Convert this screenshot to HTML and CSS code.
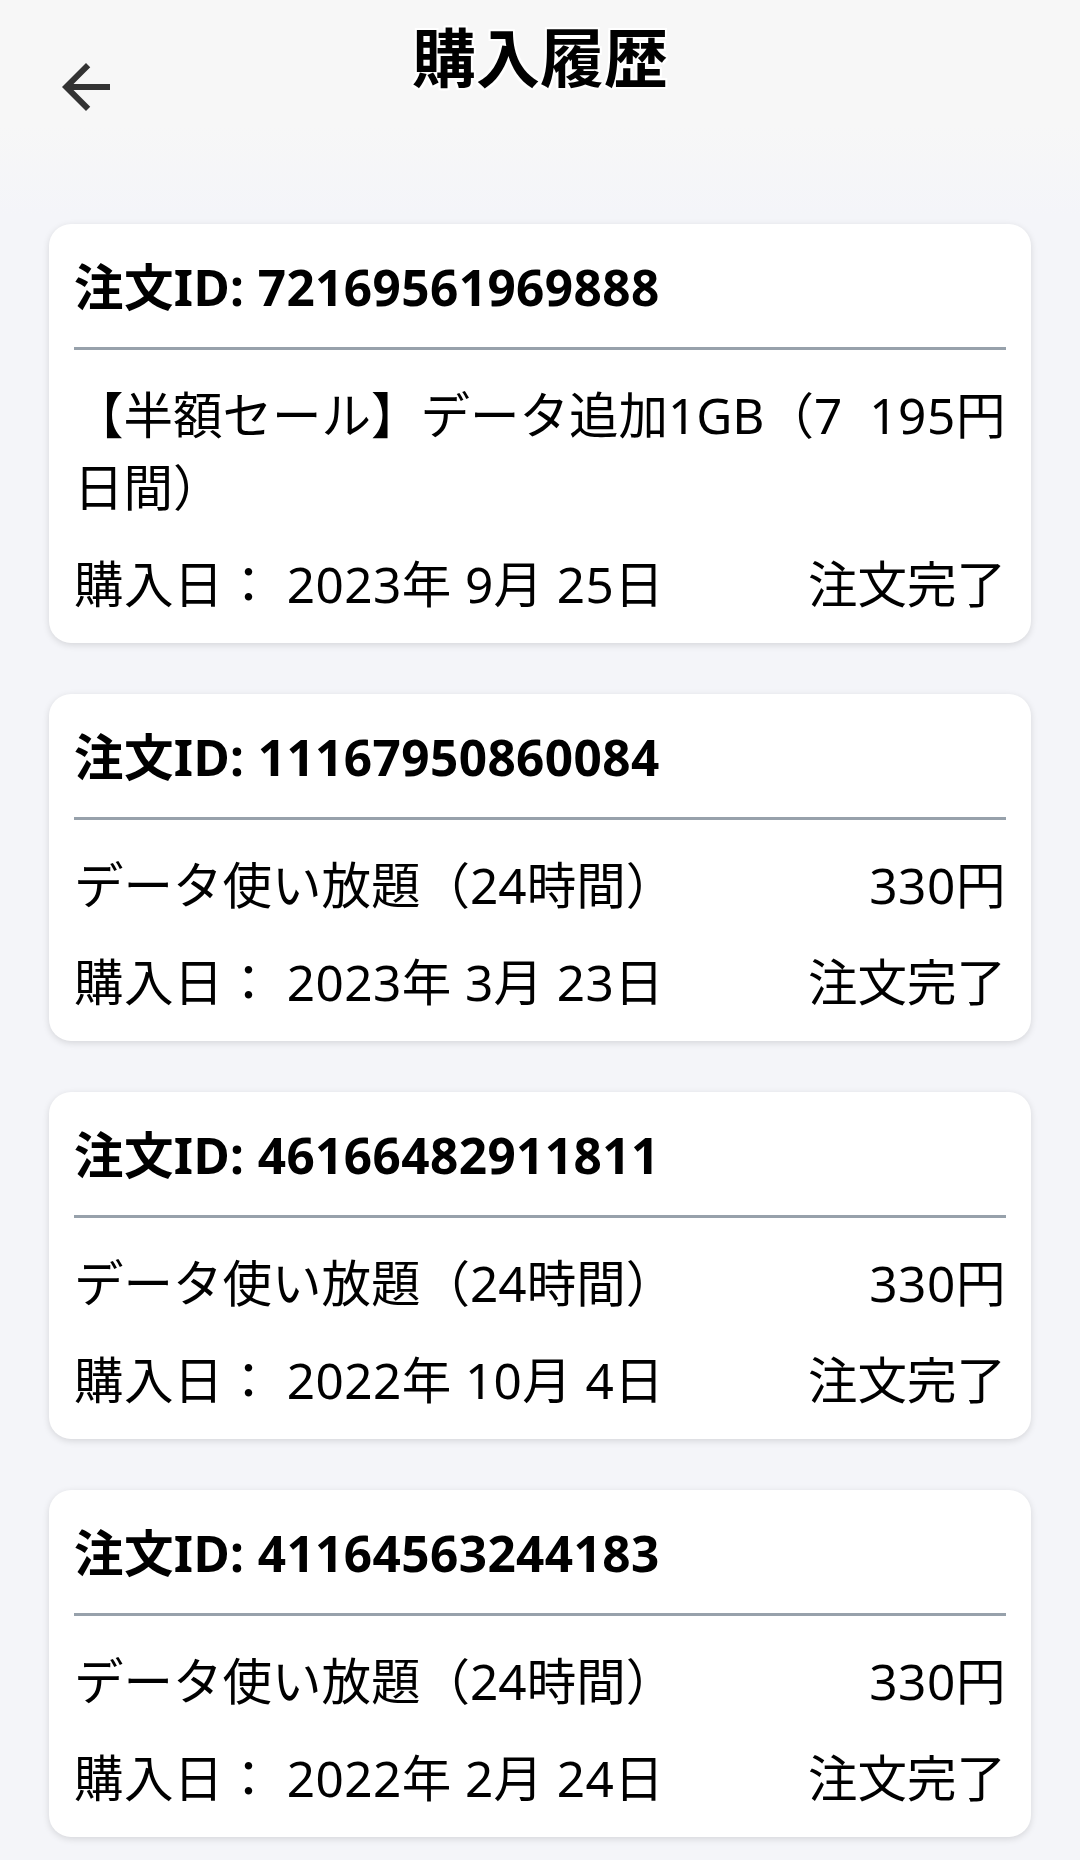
FILE: index.html
```html
<!DOCTYPE html>
<html lang="ja">
<head>
<meta charset="utf-8">
<title>購入履歴</title>
<link rel="stylesheet" href="styles.css">
</head>
<body>
<header class="header">
  <div class="back">
    <svg class="back-icon" viewBox="0 0 24 24" width="72" height="72" aria-hidden="true">
      <path d="M20 11H7.83l5.59-5.59L12 4l-8 8 8 8 1.41-1.41L7.83 13H20v-2z" fill="#333333"/>
    </svg>
  </div>
  <h1 class="title">購入履歴</h1>
</header>
<main class="list">
  <section class="card">
    <div class="order-id">注文ID: 72169561969888</div>
    <div class="divider"></div>
    <div class="row product">
      <span class="name">【半額セール】データ追加1GB（7日間）</span>
      <span class="price">195円</span>
    </div>
    <div class="row date">
      <span class="date-text">購入日： 2023年 9月 25日</span>
      <span class="status">注文完了</span>
    </div>
  </section>
  <section class="card">
    <div class="order-id">注文ID: 11167950860084</div>
    <div class="divider"></div>
    <div class="row product">
      <span class="name">データ使い放題（24時間）</span>
      <span class="price">330円</span>
    </div>
    <div class="row date">
      <span class="date-text">購入日： 2023年 3月 23日</span>
      <span class="status">注文完了</span>
    </div>
  </section>
  <section class="card">
    <div class="order-id">注文ID: 46166482911811</div>
    <div class="divider"></div>
    <div class="row product">
      <span class="name">データ使い放題（24時間）</span>
      <span class="price">330円</span>
    </div>
    <div class="row date">
      <span class="date-text">購入日： 2022年 10月 4日</span>
      <span class="status">注文完了</span>
    </div>
  </section>
  <section class="card">
    <div class="order-id">注文ID: 41164563244183</div>
    <div class="divider"></div>
    <div class="row product">
      <span class="name">データ使い放題（24時間）</span>
      <span class="price">330円</span>
    </div>
    <div class="row date">
      <span class="date-text">購入日： 2022年 2月 24日</span>
      <span class="status">注文完了</span>
    </div>
  </section>
</main>
</body>
</html>
```

FILE: styles.css
```css
html, body {
  margin: 0;
  padding: 0;
}

body {
  font-family: "Noto Sans", "Noto Sans CJK JP", sans-serif;
  color: #000;
  background: #f4f5f9 linear-gradient(to bottom, #f7f7f7 0, #f7f7f7 125px, #f4f5f9 215px) no-repeat;
  min-height: 1860px;
}

.header {
  display: grid;
  grid-template-columns: 1fr auto 1fr;
  padding-top: 18px;
}

.back {
  grid-column: 1;
  justify-self: start;
  margin-left: 50px;
  margin-top: 33px;
  width: 72px;
  height: 72px;
}

.back-icon {
  display: block;
}

.title {
  grid-column: 2;
  margin: 0;
  font-size: 64px;
  line-height: 80px;
  font-weight: 700;
  letter-spacing: 0;
  color: #000;
  text-shadow:
    2px 0 0 #fff, -2px 0 0 #fff, 0 2px 0 #fff, 0 -2px 0 #fff,
    2px 2px 0 #fff, -2px -2px 0 #fff, 2px -2px 0 #fff, -2px 2px 0 #fff;
}

.list {
  display: flex;
  flex-direction: column;
  gap: 51px;
  padding: 101px 49px 20px;
}

.card {
  background: #fff;
  border-radius: 22px;
  box-shadow: 0 2px 7px rgba(0, 0, 0, 0.13);
  padding: 25px 25px 23px;
  font-size: 49.5px;
}

.order-id {
  font-weight: 700;
  line-height: 76px;
  letter-spacing: 0.4px;
  white-space: nowrap;
}

.divider {
  height: 3px;
  background: #97a1ab;
  margin: 22px 0 29px;
}

.row {
  display: flex;
  justify-content: space-between;
  align-items: flex-start;
  gap: 8px;
  line-height: 72px;
}

.name {
  flex: 0 1 auto;
}

.price {
  flex: 0 0 auto;
  letter-spacing: 0.6px;
  white-space: nowrap;
}

.date {
  margin-top: 25px;
  white-space: nowrap;
}

.date-text {
  letter-spacing: 0.4px;
}

.status {
  letter-spacing: 0;
}
```
